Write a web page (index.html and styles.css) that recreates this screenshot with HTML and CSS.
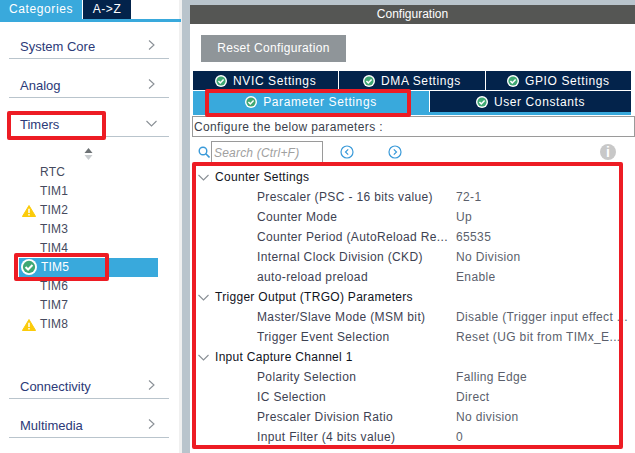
FILE: index.html
```html
<!DOCTYPE html>
<html lang="en">
<head>
    <meta charset="UTF-8">
    <title>Timers Configuration</title>
    <link rel="stylesheet" href="styles.css">
</head>
<body>
    <svg class="defs" width="0" height="0">
        <symbol id="ok" viewBox="0 0 12 12">
            <circle cx="6" cy="6" r="6" fill="#fff"/>
            <circle cx="6" cy="6" r="4.6" fill="#3fa873"/>
            <path d="M3.4 6l1.9 1.9 3.3-3.4" fill="none" stroke="#fff" stroke-width="1.5"/>
        </symbol>
        <symbol id="warn" viewBox="0 0 14 12">
            <path d="M7 0.5L13.6 11.5H0.4z" fill="#fbcb0a" stroke="#fbcb0a" stroke-linejoin="round"/>
            <path d="M7 3.8v4.2M7 9v1.4" stroke="#fff" stroke-width="1.5"/>
        </symbol>
        <symbol id="right" viewBox="0 0 7 10">
            <path d="M1 .5l5 4.500-5 4.500" fill="none" stroke="#8a9096" stroke-width="1.100"/>
        </symbol>
        <symbol id="down" viewBox="0 0 11 7">
            <path d="M.5 1l5 5 5-5" fill="none" stroke="#8a9096" stroke-width="1.100"/>
        </symbol>
    </svg>

    <div class="page">
        <aside class="sidebar">
            <div class="side-tabs">
                <div class="side-tab side-tab-on">Categories</div>
                <div class="side-tab side-tab-off">A-&gt;Z</div>
            </div>
            <div class="cat">System Core<svg class="cat-arrow"><use href="#right"/></svg></div>
            <div class="cat">Analog<svg class="cat-arrow"><use href="#right"/></svg></div>
            <div class="cat">Timers<svg class="cat-open"><use href="#down"/></svg></div>
            <div class="sort">
                <svg width="9" height="12" viewBox="0 0 9 12"><path d="M4.500 0L8.500 5H.5z" fill="#6d7275"/><path d="M4.500 12L8.500 7H.5z" fill="#c9cdd0"/></svg>
            </div>
            <ul class="ip-list">
                <li>RTC</li>
                <li>TIM1</li>
                <li><svg class="ip-warn"><use href="#warn"/></svg>TIM2</li>
                <li>TIM3</li>
                <li>TIM4</li>
                <li class="ip-on"><svg class="ip-ok"><use href="#ok"/></svg>TIM5</li>
                <li>TIM6</li>
                <li>TIM7</li>
                <li><svg class="ip-warn"><use href="#warn"/></svg>TIM8</li>
            </ul>
            <div class="cat">Connectivity<svg class="cat-arrow"><use href="#right"/></svg></div>
            <div class="cat">Multimedia<svg class="cat-arrow"><use href="#right"/></svg></div>
        </aside>

        <main class="main">
            <div class="title">Configuration</div>
            <div class="reset-wrap"><div class="reset">Reset Configuration</div></div>
            <div class="tabs">
                <div class="tab"><svg class="tab-ok"><use href="#ok"/></svg>NVIC Settings</div>
                <div class="tab"><svg class="tab-ok"><use href="#ok"/></svg>DMA Settings</div>
                <div class="tab"><svg class="tab-ok"><use href="#ok"/></svg>GPIO Settings</div>
            </div>
            <div class="tabs tabs-low">
                <div class="tab tab-on"><svg class="tab-ok"><use href="#ok"/></svg>Parameter Settings</div>
                <div class="tab tab-user"><svg class="tab-ok"><use href="#ok"/></svg>User Constants</div>
            </div>
            <div class="hint">Configure the below parameters :</div>
            <div class="tools">
                <svg class="search-icon" width="12" height="12" viewBox="0 0 12 12"><circle cx="5" cy="5" r="3.800" fill="none" stroke="#3a9ad9" stroke-width="1.400"/><path d="M7.800 7.800L11.500 11.500" stroke="#3a9ad9" stroke-width="1.600"/></svg>
                <div class="search">Search (Ctrl+F)</div>
                <svg class="nav-prev" width="14" height="14" viewBox="0 0 14 14"><circle cx="7" cy="7" r="6" fill="none" stroke="#3a9ad9" stroke-width="1.200"/><path d="M8.200 4.300L5.500 7l2.700 2.700" fill="none" stroke="#3a9ad9" stroke-width="1.200"/></svg>
                <svg class="nav-next" width="14" height="14" viewBox="0 0 14 14"><circle cx="7" cy="7" r="6" fill="none" stroke="#3a9ad9" stroke-width="1.200"/><path d="M5.800 4.300L8.500 7l-2.700 2.700" fill="none" stroke="#3a9ad9" stroke-width="1.200"/></svg>
                <div class="info">i</div>
            </div>
            <div class="params">
                <div class="group"><svg class="group-arrow"><use href="#down"/></svg>Counter Settings</div>
                <div class="param"><span class="p-name">Prescaler (PSC - 16 bits value)</span><span class="p-val">72-1</span></div>
                <div class="param"><span class="p-name">Counter Mode</span><span class="p-val">Up</span></div>
                <div class="param"><span class="p-name">Counter Period (AutoReload Re...</span><span class="p-val">65535</span></div>
                <div class="param"><span class="p-name">Internal Clock Division (CKD)</span><span class="p-val">No Division</span></div>
                <div class="param"><span class="p-name">auto-reload preload</span><span class="p-val">Enable</span></div>
                <div class="group"><svg class="group-arrow"><use href="#down"/></svg>Trigger Output (TRGO) Parameters</div>
                <div class="param"><span class="p-name">Master/Slave Mode (MSM bit)</span><span class="p-val">Disable (Trigger input effect ...</span></div>
                <div class="param"><span class="p-name">Trigger Event Selection</span><span class="p-val">Reset (UG bit from TIMx_E...</span></div>
                <div class="group"><svg class="group-arrow"><use href="#down"/></svg>Input Capture Channel 1</div>
                <div class="param"><span class="p-name">Polarity Selection</span><span class="p-val">Falling Edge</span></div>
                <div class="param"><span class="p-name">IC Selection</span><span class="p-val">Direct</span></div>
                <div class="param"><span class="p-name">Prescaler Division Ratio</span><span class="p-val">No division</span></div>
                <div class="param"><span class="p-name">Input Filter (4 bits value)</span><span class="p-val">0</span></div>
            </div>
        </main>
    </div>

    <!-- marcas rojas encima de la captura -->
    <div class="mark mark-timers"></div>
    <div class="mark mark-tim5"></div>
    <div class="mark mark-param"></div>
    <div class="mark mark-list"></div>
</body>
</html>
```

FILE: styles.css
```css
* {
    box-sizing: border-box;
}
html, body {
    margin: 0;
    height: 100%;
    overflow: hidden;
}
body {
    font-family: "Liberation Sans", Arial, sans-serif;
    font-size: 12px;
    background: #fff;
    position: relative;
}
.defs {
    position: absolute;
}
.page {
    display: flex;
    height: 453px;
    background: #b9c4cc;
}

/* panel izquierdo */
.sidebar {
    width: 179px;
    height: 100%;
    margin-right: 11px;
    background: #fff;
    box-shadow: 3px 0 0 #f0f0f0;
    flex-shrink: 0;
}
.side-tabs {
    display: flex;
    height: 22px;
    border-bottom: 3px solid #39a9dc;
    gap: 1px;
    margin-right: -2px;
}
.side-tab {
    color: #fff;
    letter-spacing: .6px;
    line-height: 19px;
    text-align: center;
}
.side-tab-on {
    width: 82px;
    background: #39a9dc;
}
.side-tab-off {
    width: 48px;
    background: #03234b;
}
.cat {
    position: relative;
    height: 39px;
    margin: 0 10px 0 9px;
    padding: 19px 0 0 11px;
    border-bottom: 1px solid #b9c4cc;
    color: #2c3a78;
    font-size: 13px;
    line-height: 16px;
}
.sidebar .side-tabs + .cat {
    height: 37px;
    padding-top: 17px;
}
.cat-arrow {
    position: absolute;
    right: 14px;
    top: 20px;
    width: 7px;
    height: 10px;
}
.side-tabs + .cat .cat-arrow {
    top: 18px;
}
.cat-open {
    position: absolute;
    right: 12px;
    top: 22px;
    width: 11px;
    height: 7px;
}
.sort {
    height: 26px;
    padding: 11px 0 0 84px;
    line-height: 0;
}
.ip-list {
    list-style: none;
    margin: 0 0 26px;
    padding: 0;
    color: #454a5e;
    letter-spacing: .2px;
}
.ip-list li {
    position: relative;
    width: 158px;
    height: 19px;
    padding-left: 40px;
    line-height: 19px;
}
.ip-list .ip-on {
    margin-left: 19px;
    width: 139px;
    padding-left: 22px;
    background: #39a9dc;
    color: #fff;
}
.ip-warn {
    position: absolute;
    left: 22px;
    top: 4px;
    width: 14px;
    height: 12px;
}
.ip-ok {
    position: absolute;
    left: 2px;
    top: 1px;
    width: 16px;
    height: 16px;
}

/* panel derecho */
.main {
    flex: 1;
    min-width: 0;
    margin-top: 5px;
    background: #fff;
}
.title {
    height: 19px;
    background: #555654;
    color: #fff;
    line-height: 19px;
    text-align: center;
}
.reset-wrap {
    padding: 11px 0 9px 11px;
}
.reset {
    width: 145px;
    height: 27px;
    background: #8f9599;
    color: #fff;
    letter-spacing: .35px;
    line-height: 27px;
    text-align: center;
}
.tabs {
    display: flex;
    gap: 1px;
    height: 19px;
    margin: 0 4px 1px 3px;
}
.tab {
    flex: 1;
    display: flex;
    align-items: center;
    justify-content: center;
    padding-top: 1px;
    background: #03234b;
    color: #fff;
    letter-spacing: .6px;
}
.tab-ok {
    width: 12px;
    height: 12px;
    margin-right: 6px;
}
.tabs-low {
    height: 24px;
    margin-bottom: 0;
    border-bottom: 3px solid #39a9dc;
}
.tabs-low .tab {
    padding-top: 0;
}
.tab-on {
    flex: 0 0 236px;
    background: #39a9dc;
}
.hint {
    height: 21px;
    margin: 1px 0 0 2px;
    border: 1px solid #9a9a9a;
    color: #3b3f4c;
    line-height: 20px;
    letter-spacing: .36px;
    padding-left: 1px;
}
.tools {
    position: relative;
    display: flex;
    align-items: center;
    height: 21px;
    margin-top: 4px;
    padding-left: 8px;
}
.search-icon {
    flex-shrink: 0;
    margin-right: 1px;
}
.search {
    width: 112px;
    height: 21px;
    border: 1px solid #9a9a9a;
    border-bottom: 0;
    color: #a0a0a0;
    font-style: italic;
    line-height: 22px;
    padding-left: 2px;
    letter-spacing: .2px;
}
.nav-prev {
    margin-left: 17px;
}
.nav-next {
    margin-left: 34px;
}
.info {
    position: absolute;
    left: 410px;
    top: 3px;
    width: 16px;
    height: 16px;
    border-radius: 50%;
    background: #c8c8c8;
    color: #fff;
    font-size: 14px;
    font-weight: bold;
    line-height: 16px;
    text-align: center;
}
.params {
    margin-top: 2px;
    padding-top: 3px;
}
.group, .param {
    display: flex;
    align-items: center;
    height: 20px;
}
.group {
    padding-left: 25px;
    position: relative;
    color: #10131c;
    letter-spacing: .3px;
}
.group-arrow {
    position: absolute;
    left: 8px;
    top: 7px;
    width: 11px;
    height: 7px;
}
.param {
    padding-left: 67px;
    color: #3d4252;
    letter-spacing: .36px;
}
.p-name {
    width: 199px;
    flex-shrink: 0;
}
.p-val {
    color: #5b5f6c;
    white-space: nowrap;
}

/* marcas */
.mark {
    position: absolute;
    border: 4px solid #ed1c24;
    border-radius: 2px;
}
.mark-timers {
    left: 7px;
    top: 111px;
    width: 99px;
    height: 29px;
}
.mark-tim5 {
    left: 14px;
    top: 253px;
    width: 95px;
    height: 28px;
}
.mark-param {
    left: 205px;
    top: 89px;
    width: 206px;
    height: 28px;
}
.mark-list {
    left: 192px;
    top: 162px;
    width: 431px;
    height: 287px;
}
```
